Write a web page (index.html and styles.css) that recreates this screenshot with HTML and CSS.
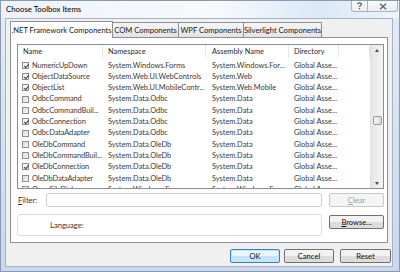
FILE: index.html
```html
<!DOCTYPE html>
<html lang="en">
<head>
  <meta charset="UTF-8" />
  <title>Choose Toolbox Items</title>
  <link rel="stylesheet" href="styles.css">
</head>
<body>
  <div class="window">
    <div class="titlebar">
      <span class="title">Choose Toolbox Items</span>
      <div class="caption-btns">
        <span class="cap help">
          <svg width="7" height="8" viewBox="0 0 7 8"><path d="M1.5 2.2 C1.5 0.4 5.5 0.4 5.5 2.2 C5.5 3.4 3.5 3.6 3.5 5" fill="none" stroke="#555" stroke-width="1.1"/><rect x="2.9" y="6" width="1.2" height="1.2" fill="#555"/></svg>
        </span>
        <span class="cap close">
          <svg width="8" height="7" viewBox="0 0 8 7"><path d="M1 0.8 L7 6.2 M7 0.8 L1 6.2" stroke="#666" stroke-width="1.4"/></svg>
        </span>
      </div>
    </div>

    <div class="client">
      <div class="tabs">
        <div class="tab active t1">.NET Framework Components</div>
        <div class="tab t2">COM Components</div>
        <div class="tab t3">WPF Components</div>
        <div class="tab t4">Silverlight Components</div>
      </div>

      <div class="panel">
        <div class="list">
          <div class="list-body">
            <div class="row header">
              <span>Name</span><span>Namespace</span><span class="c3">Assembly Name</span><span>Directory</span><span></span>
            </div>
            <div class="rows">
              <div class="row"><span class="name"><i class="cb on"></i>NumericUpDown</span><span>System.Windows.Forms</span><span class="c3">System.Windows.For...</span><span>Global Asse...</span><span></span></div>
              <div class="row"><span class="name"><i class="cb on"></i>ObjectDataSource</span><span>System.Web.UI.WebControls</span><span class="c3">System.Web</span><span>Global Asse...</span><span></span></div>
              <div class="row"><span class="name"><i class="cb on"></i>ObjectList</span><span>System.Web.UI.MobileContr...</span><span class="c3">System.Web.Mobile</span><span>Global Asse...</span><span></span></div>
              <div class="row"><span class="name"><i class="cb"></i>OdbcCommand</span><span>System.Data.Odbc</span><span class="c3">System.Data</span><span>Global Asse...</span><span></span></div>
              <div class="row"><span class="name"><i class="cb"></i>OdbcCommandBuil...</span><span>System.Data.Odbc</span><span class="c3">System.Data</span><span>Global Asse...</span><span></span></div>
              <div class="row"><span class="name"><i class="cb on"></i>OdbcConnection</span><span>System.Data.Odbc</span><span class="c3">System.Data</span><span>Global Asse...</span><span></span></div>
              <div class="row"><span class="name"><i class="cb"></i>OdbcDataAdapter</span><span>System.Data.Odbc</span><span class="c3">System.Data</span><span>Global Asse...</span><span></span></div>
              <div class="row"><span class="name"><i class="cb"></i>OleDbCommand</span><span>System.Data.OleDb</span><span class="c3">System.Data</span><span>Global Asse...</span><span></span></div>
              <div class="row"><span class="name"><i class="cb"></i>OleDbCommandBuil...</span><span>System.Data.OleDb</span><span class="c3">System.Data</span><span>Global Asse...</span><span></span></div>
              <div class="row"><span class="name"><i class="cb on"></i>OleDbConnection</span><span>System.Data.OleDb</span><span class="c3">System.Data</span><span>Global Asse...</span><span></span></div>
              <div class="row"><span class="name"><i class="cb"></i>OleDbDataAdapter</span><span>System.Data.OleDb</span><span class="c3">System.Data</span><span>Global Asse...</span><span></span></div>
              <div class="row"><span class="name"><i class="cb on"></i>OpenFileDialog</span><span>System.Windows.Forms</span><span class="c3">System.Windows.For...</span><span>Global Asse...</span><span></span></div>
            </div>
          </div>
          <div class="scroll">
            <span class="arrow up"></span>
            <span class="thumb"></span>
            <span class="arrow down"></span>
          </div>
        </div>

        <div class="filter-row">
          <label class="lbl"><u>F</u>ilter:</label>
          <div class="input"></div>
          <button class="btn disabled"><u>C</u>lear</button>
        </div>

        <div class="lang-row">
          <div class="lang-box">Language:</div>
          <button class="btn"><u>B</u>rowse...</button>
        </div>
      </div>

      <div class="actions">
        <button class="btn primary">OK</button>
        <button class="btn">Cancel</button>
        <button class="btn reset">Reset</button>
      </div>
    </div>
  </div>
</body>
</html>
```

FILE: styles.css
```css
* { box-sizing: border-box; }
body { margin: 0; width: 400px; height: 272px; overflow: hidden; font-family: Lato, "Liberation Sans", sans-serif; font-size: 7.6px; color: #2b2b2b; }

.window { height: 272px; display: flex; flex-direction: column; padding: 0 6px 4px 4px; background: linear-gradient(#e4ecf6, #c9d8ec); border: 1px solid #8799b3; }
.titlebar { height: 17px; margin: 0 -6px 0 -4px; display: flex; align-items: flex-start; justify-content: space-between; background: linear-gradient(to right, #eef2f7, #f7f9fc 55%, #dbe8f6 80%, #eef4fb); }
.title { padding: 3px 0 0 5px; color: #000; font-size: 7.8px; }
.caption-btns { display: flex; margin-right: 1px; }
.cap { height: 11px; display: flex; align-items: center; justify-content: center; border: 1px solid #a9b2bd; border-top: none; background: linear-gradient(#fbfbfb, #e9edf2); }
.help { width: 17px; border-radius: 0 0 0 3px; }
.close { width: 30px; border-left: none; border-radius: 0 0 3px 0; }

.client { flex: 1; background: #f0f0f0; border: 1px solid #a6b3c4; display: flex; flex-direction: column; }

.tabs { display: flex; margin: 2px 0 0 4px; height: 16px; align-items: flex-end; position: relative; z-index: 1; }
.tab { height: 15px; border: 1px solid #8d9197; border-bottom: none; margin-right: -1px; background: linear-gradient(#f6f6f6, #e3e3e3); display: flex; align-items: center; justify-content: center; color: #1a1a1a; white-space: nowrap; }
.tab.active { height: 17px; margin-bottom: -1px; background: #fff; }
.t1 { width: 103px; }
.t2 { width: 67px; }
.t3 { width: 66px; }
.t4 { width: 79px; }

.panel { margin: 0 4px 0 4px; height: 206px; background: #fff; border: 1px solid #8d9197; padding: 6px 3px 6px 6px; display: flex; flex-direction: column; }

.list { height: 146px; border: 1px solid #8a8f97; display: flex; overflow: hidden; font-size: 7.4px; }
.list-body { flex: 1; overflow: hidden; }
.row { display: grid; grid-template-columns: 85px 103px 83px 50px 1fr; height: 11.3px; line-height: 11.3px; white-space: nowrap; color: #3a3a3a; }
.row span { padding-left: 5px; overflow: hidden; }
.row .c3 { padding-left: 6px; }
.header { height: 13px; line-height: 13px; color: #1c2a3c; }
.header span { border-right: 1px solid #e3e6ea; }
.rows { padding-top: 1.6px; }
.row .name { padding-left: 4px; display: flex; align-items: center; letter-spacing: -0.1px; }
.cb { width: 7px; height: 7px; margin-right: 3px; border: 1px solid #8f8f8f; background: linear-gradient(135deg, #dcdcdc, #f6f6f6); flex: none; position: relative; }
.cb.on { background: #f4f4f4; }
.cb.on::after { content: ""; position: absolute; left: 1.5px; top: 0; width: 2px; height: 3.6px; border: solid #2c3c5c; border-width: 0 1.2px 1.2px 0; transform: rotate(40deg); }

.scroll { width: 13px; background: linear-gradient(to right, #e6e6e6, #f3f3f3); border-left: 1px solid #e0e0e0; display: flex; flex-direction: column; align-items: center; padding: 4px 0 3px; }
.arrow { width: 0; height: 0; border-left: 2.5px solid transparent; border-right: 2.5px solid transparent; }
.arrow.up { border-bottom: 3px solid #4d4d4d; }
.arrow.down { border-top: 3px solid #4d4d4d; margin-top: auto; }
.thumb { width: 9px; height: 9px; margin-top: 64px; border: 1px solid #989898; border-radius: 2px; background: linear-gradient(to right, #f4f4f4, #dcdcdc); }

.filter-row { display: flex; align-items: center; margin-top: 4px; height: 14px; }
.lbl { width: 29px; padding-left: 1px; color: #333; }
.input { width: 277px; height: 14px; border: 1px solid #c9ccd1; border-radius: 2px; }
.btn { font: inherit; color: #111; height: 14px; padding: 0; border: 1px solid #707070; border-radius: 2px; background: linear-gradient(#f2f2f2 50%, #dcdcdc 50%); }
.filter-row .btn, .lang-row .btn { width: 55px; margin-left: 7px; }
.btn.disabled { color: #a0a0a0; border-color: #c8c8c8; background: #f4f4f4; }

.lang-row { display: flex; margin-top: 7px; align-items: flex-start; }
.lang-box { width: 306px; height: 22px; border: 1px solid #d5dfe5; border-radius: 3px; padding-left: 32px; line-height: 20px; color: #333; }
.lang-row .btn { margin-top: 1px; }

.actions { display: flex; justify-content: flex-end; margin: 6px 1px 0 0; gap: 4px; }
.actions .btn { width: 50px; }
.actions .reset { width: 51px; margin-left: 2px; }
.btn.primary { border-color: #3c7fb1; background: linear-gradient(#eaf6fd 50%, #c4e4f7 50%); box-shadow: inset 0 0 0 1px #bfe6fb; }
```
